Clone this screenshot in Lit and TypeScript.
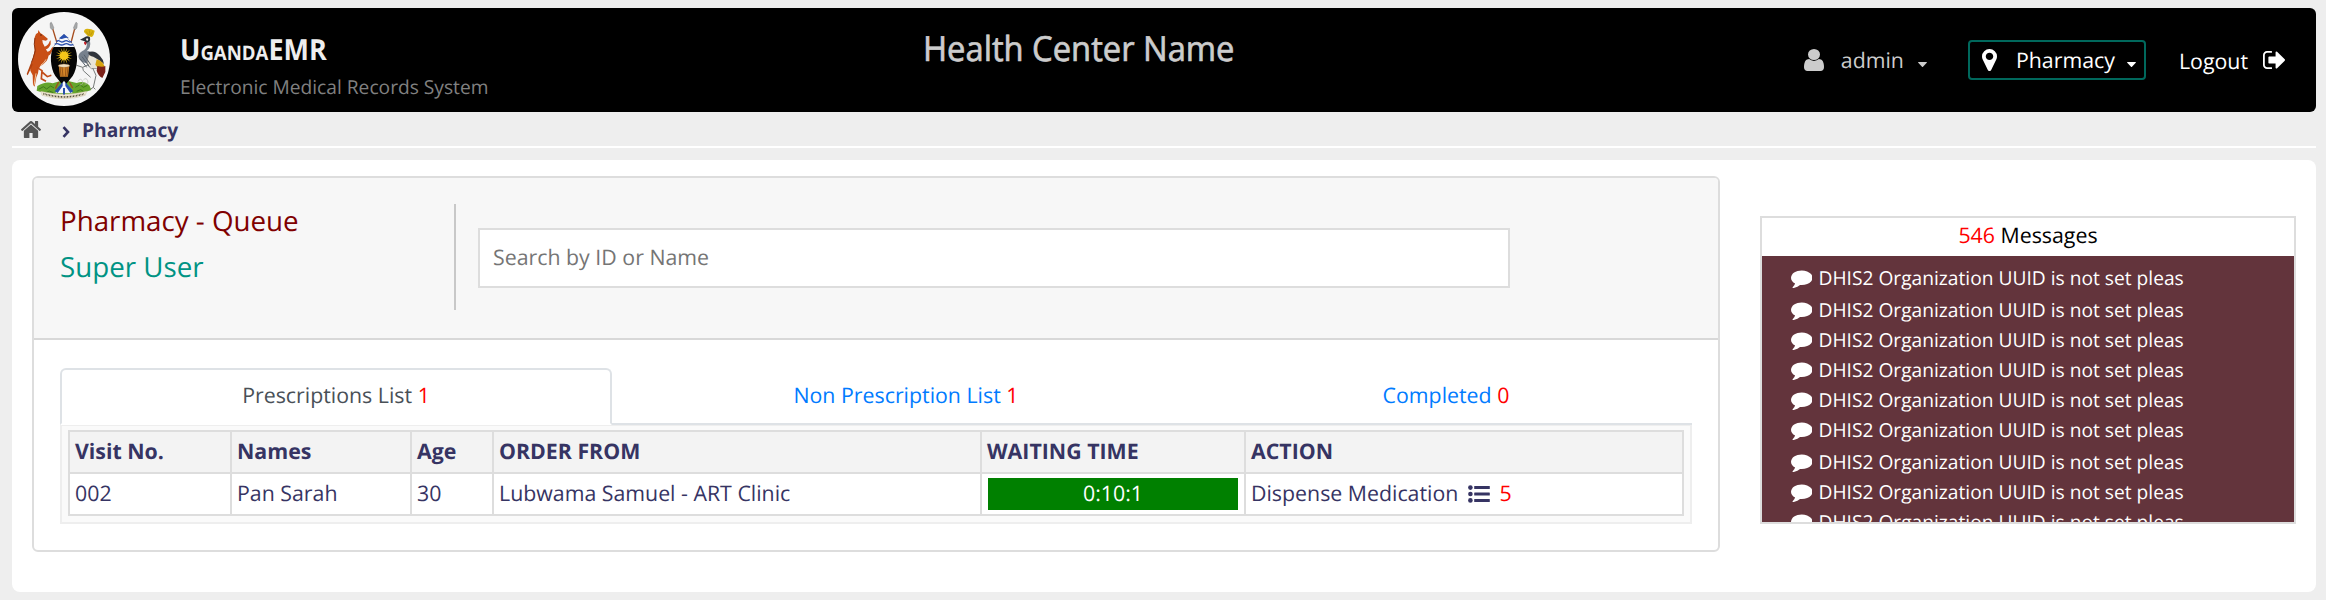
import { LitElement, html, css, svg } from "lit";
import { customElement } from "lit/decorators.js";

const P = {
  home: "M1472 992v480q0 26-19 45t-45 19h-384v-384h-256v384h-384q-26 0-45-19t-19-45v-480q0-1 .5-3t.5-3l575-474 575 474q1 2 1 6zm223-69l-62 74q-8 9-21 11h-3q-13 0-21-7l-692-577-692 577q-12 8-24 7-13-2-21-11l-62-74q-8-10-7-23.5t11-21.5l719-599q32-26 76-26t76 26l244 204v-195q0-14 9-23t23-9h192q14 0 23 9t9 23v408l219 182q10 8 11 21.5t-7 23.5z",
  user: "M1536 1399q0 109-62.5 187t-150.5 78h-854q-88 0-150.5-78t-62.5-187q0-85 8.5-160.5t31.5-152 58.5-131 94-89 134.5-34.5q131 128 313 128t313-128q76 0 134.5 34.5t94 89 58.5 131 31.5 152 8.5 160.5zm-256-887q0 159-112.5 271.5t-271.5 112.5-271.5-112.5-112.5-271.5 112.5-271.5 271.5-112.5 271.5 112.5 112.5 271.5z",
  marker: "M1152 640q0-106-75-181t-181-75-181 75-75 181 75 181 181 75 181-75 75-181zm256 0q0 109-33 179l-364 774q-16 33-47.5 52t-67.5 19-67.5-19-46.5-52l-365-774q-33-70-33-179 0-212 150-362t362-150 362 150 150 362z",
  signout: "M704 1440q0 4 1 20t.5 26.5-3 23.5-10 19.5-20.5 6.5h-320q-119 0-203.5-84.5t-84.5-203.5v-704q0-119 84.5-203.5t203.5-84.5h320q13 0 22.5 9.5t9.5 22.5q0 4 1 20t.5 26.5-3 23.5-10 19.5-20.5 6.5h-320q-66 0-113 47t-47 113v704q0 66 47 113t113 47h312l11.5 1 11.5 3 8 5.5 7 9 2 13.5zm928-544q0 26-19 45l-544 544q-19 19-45 19t-45-19-19-45v-288h-448q-26 0-45-19t-19-45v-384q0-26 19-45t45-19h448v-288q0-26 19-45t45-19 45 19l544 544q19 19 19 45z",
  comment: "M1792 896q0 174-120 321.5t-326 233-450 85.5q-70 0-145-8-198 175-460 242-49 14-114 22-17 2-30.5-9t-17.5-29v-1q-3-4-.5-12t2-10 4.5-9.5l6-9 7-8.5 8-9q7-8 31-34.5t34.500-38 31-39.500 32.500-51 27-59 26-76q-157-89-247.500-220t-90.500-281q0-130 71-248.500t191-204.500 286-136.500 348-50.500q244 0 450 85.500t326 233 120 321.500z",
  caret: "M0 0.6Q0 0 0.6 0H8.4Q9 0 9 0.6L5 4.8Q4.500 5.200 4 4.800Z",
};

const icon = (d: string, box: string, w: number, h: number, cls = "") =>
  html`<svg class="icon ${cls}" viewBox=${box} width=${w} height=${h} preserveAspectRatio="none"><path d=${d} fill="currentColor"></path></svg>`;

const rays = Array.from({ length: 16 }, (_, i) => i * 22.5);

@customElement("coat-of-arms")
export class CoatOfArms extends LitElement {
  static styles = css`
    :host { display: block; width: 92px; height: 94px; }
    svg { display: block; }
  `;
  render() {
    return html`<svg width="92" height="94" viewBox="0 0 276 282">
      <ellipse cx="138" cy="141" rx="138" ry="141" fill="#f5f5f5"></ellipse>
      <path d="M58 222Q84 206 104 214L138 204L176 213Q198 204 214 220L220 234Q180 250 138 246Q94 250 56 236Z" fill="#65a52c"></path>
      <path d="M62 232l14-8 10 7 12-9 10 6M172 226l14-8 10 8 12-6M84 242l10-5 12 5M176 238l12-5 8 5" stroke="#3f7a1c" stroke-width="3" fill="none"></path>
      <g fill="none" stroke="#a64b1c" stroke-width="4">
        <path d="M104 50L118 96"></path><path d="M170 50L158 96"></path>
        <path d="M122 210L112 230"></path><path d="M154 210L164 228"></path>
      </g>
      <path d="M96 34q4-8 7 2l5 12-5 6-6-6z" fill="#a5a7a8" stroke="#6c6e70"></path>
      <path d="M178 34q-4-8-7 2l-5 12 5 6 6-6z" fill="#a5a7a8" stroke="#6c6e70"></path>
      <g fill="#c94f16">
        <path d="M50 76L54 66L60 62L61 54L67 63Q72 66 84 76L90 81L84 86L73 84Q72 94 81 106L90 124Q94 134 86 146Q78 156 67 162Q60 170 60 184L55 196L50 224L45 218L44 190L37 176Q36 160 42 146Q49 126 50 112Q47 94 50 76Z"></path>
        <path d="M80 118Q96 122 101 108L104 104L106 111L96 128Q86 136 76 132Z"></path>
        <path d="M80 104Q92 100 95 88L98 85L98 97Q92 112 82 112Z"></path>
      </g>
      <path d="M40 150L26 186L29 190L44 158Z" fill="#b2410e"></path>
      <path d="M56 166L72 176L70 200L84 208M72 180L88 194L100 190" fill="none" stroke="#c24c18" stroke-width="5"></path>
      <path d="M84 142Q80 152 68 160M54 184L48 220" fill="none" stroke="#eec49c" stroke-width="3"></path>
      <path d="M51 78Q46 96 52 116Q46 140 40 152" fill="none" stroke="#8a3210" stroke-width="3"></path>
      <circle cx="69" cy="69" r="2" fill="#3a1a0c"></circle>

      <path d="M198 60Q197 51 208 50Q221 50 230 56Q228 70 222 75L210 73Z" fill="#d8b20e"></path>
      <path d="M204 58l9 12M214 55l2 15M224 58l-6 12" stroke="#a98505" stroke-width="1.500"></path>
      <path d="M186 83L200 76Q208 70 216 76Q219 86 212 94Q204 98 200 88Z" fill="#2a3038"></path>
      <path d="M204 80q4-3 7 1l-2 5q-5 1-5-6z" fill="#f3f3f3"></path>
      <path d="M198 90q6-3 8 3l-3 7q-6-2-5-10z" fill="#c22029"></path>
      <path d="M206 92Q210 108 192 118Q176 128 184 142Q196 158 214 150Q226 140 222 126Q216 114 206 118Q220 106 216 88Z" fill="#77818d"></path>
      <path d="M212 130Q228 118 240 132Q252 146 250 164Q236 172 220 170Q200 158 212 130Z" fill="#e9e4d8" stroke="#777" stroke-width="2"></path>
      <path d="M210 122Q228 112 246 132Q256 142 258 156Q242 142 226 134Q214 132 210 122Z" fill="#30343c"></path>
      <path d="M236 142Q256 148 260 166L254 180Q238 168 232 158Z" fill="#d7a40f"></path>
      <path d="M238 162Q254 166 262 162L262 180L253 198Q240 190 236 176Z" fill="#7c2219"></path>
      <path d="M186 140L206 166M192 134L214 164M198 128L218 158" fill="none" stroke="#56606b" stroke-width="3"></path>
      <path d="M212 158L194 166L176 160M194 166L196 176L218 196M224 168L234 190L226 226M226 226l-9 6M226 226l6 6" fill="none" stroke="#777b7a" stroke-width="3"></path>
      <path d="M180 208q8-12 13-1t-8 12M196 204q9-9 13 2t-9 10" fill="none" stroke="#b6b9b3" stroke-width="2"></path>

      <path d="M138 66C132 76 120 84 107 104C94 126 97 166 112 192L138 224L164 192C179 166 182 126 169 104C156 84 144 76 138 66Z" fill="#050505"></path>
      <path d="M138 66C132 76 120 84 107 105H169C156 84 144 76 138 66Z" fill="#f4f6fb"></path>
      <path d="M138 66L123 79Q131 83 138 79T153 79Z" fill="#284fae"></path>
      <path d="M115 88q6-4 11 0t12 0 12 0 11 0M110 97q7-4 14 0t14 0 14 0 14 0" stroke="#284fae" stroke-width="4" fill="none"></path>
      <g fill="#f4c619">
        ${rays.map((r) => svg`<path d="M136 122L138 105L140 122Z" transform="rotate(${r} 138 131)"></path>`)}
        <ellipse cx="138" cy="131" rx="13" ry="12"></ellipse>
      </g>
      <path d="M122 160L126 194H150L154 160Z" fill="#d28327"></path>
      <path d="M126 164l3 29M132 164l3 29M144 164l-2 29M150 164l-3 29" stroke="#7c4312" stroke-width="2"></path>
      <ellipse cx="138" cy="161" rx="17" ry="5" fill="#f0dfbe" stroke="#9b7040"></ellipse>
      <path d="M138 206L112 244H164Z" fill="#f5f7fa"></path>
      <path d="M134 210L110 238L119 243L134 222ZM142 210L166 238L157 243L142 222ZM135 228H141V250H135Z" fill="#284fae"></path>
      <path d="M68 238Q104 246 138 248Q172 246 206 238L202 250Q172 260 138 260Q104 260 72 250Z" fill="#efe8d3" stroke="#b9ac8c"></path>
      <path d="M76 245Q106 254 138 255Q170 254 200 245" fill="none" stroke="#57503c" stroke-width="5" stroke-dasharray="3 2 2 2"></path>
    </svg>`;
  }
}

@customElement("app-root")
export class AppRoot extends LitElement {
  static styles = css`
    :host { display: block; height: 600px; box-sizing: border-box; padding: 8px 10px 8px 12px; background: #eee;
      font-family: "Open Sans", "Noto Sans", sans-serif; font-size: 21.33px; color: #363463; overflow: hidden; white-space: nowrap;
      text-rendering: geometricPrecision; }
    * { box-sizing: border-box; }
    .icon { display: block; flex: none; }
    .top { height: 104px; background: #000; border-radius: 6px; display: grid; grid-template-columns: 168px 740px 1fr auto; }
    .crest { padding: 4px 0 0 6px; }
    .brand { padding-top: 24px; }
    .name { font-size: 29px; line-height: 36px; color: #eee; font-weight: 700; font-variant: small-caps; transform-origin: 0 0; transform: scaleX(.93); }
    .tag { font-size: 19.2px; line-height: 28px; color: #808080; padding-top: 5px; }
    .center { font-size: 34.5px; line-height: 44px; padding: 19px 0 0 3px; color: #ccc; -webkit-text-stroke: .7px #ccc; }
    .center span { display: inline-block; transform-origin: 0 0; transform: scaleX(.948); }
    .nav { display: flex; align-items: flex-start; padding-top: 32px; color: #fff; }
    .item { display: flex; align-items: center; height: 40px; }
    .item span { padding-top: 1px; }
    .user { color: #ccc; gap: 17px; margin-right: 41px; }
    .user .caret { margin-left: -3px; margin-top: 9px; }
    .loc { border: 2px solid #00685c; border-radius: 4px; width: 178px; padding-left: 12px; }
    .loc .label { margin: 0 12px 0 19px; }
    .loc .caret { margin-top: 9px; }
    .out { margin-left: 33px; margin-right: 31px; gap: 15px; padding-top: 2px; }
    .out .arrow { margin-top: -2px; }
    .crumbs { height: 36px; border-bottom: 2px solid #fff; display: flex; align-items: center; padding: 0 0 0 9px; font-size: 19.2px; font-weight: 700; }
    .crumbs .house { color: #555; }
    .crumbs .chev { margin: 5px 12px 0 21px; }
    .page { margin-top: 12px; height: 432px; background: #fff; border-radius: 8px; padding: 16px 20px; display: flex; gap: 40px; align-items: flex-start; }
    .queue { width: 1688px; height: 376px; border: 2px solid #ddd; border-radius: 6px; overflow: hidden; }
    .qhead { height: 162px; background: #f7f7f7; border-bottom: 2px solid #d8d8d8; display: flex; }
    .titles { width: 420px; padding: 20px 0 0 26px; font-size: 27.73px; line-height: 46px; color: #800000; }
    .titles .who { color: #009384; }
    .rule { width: 2px; height: 106px; background: #c8c8c8; margin-top: 26px; }
    .search { margin: 50px 0 0 22px; width: 1032px; height: 60px; border: 2px solid #ddd; background: #fff; color: #757575; padding: 0 0 0 13px; line-height: 56px; }
    .body { padding: 28px 26px 0; }
    .tabs { display: grid; grid-template-columns: 552px 586px 1fr; height: 56px; }
    .tab { text-align: center; color: #007bff; border-bottom: 2px solid #dee2e6; line-height: 55px; padding-left: 2px; }
    .tab.on { color: #495057; border: 2px solid #dee2e6; border-bottom-color: #fff; border-radius: 6px 6px 0 0; line-height: 51px; padding-left: 0; }
    .red { color: #f00; }
    .pane { border: 2px solid #eee; background: #fafafa; height: 100px; padding: 4px 6px 6px; }
    .grid { display: grid; grid-template-columns: 160px 178px 80px 486px 262px 1fr; grid-auto-rows: 40px; gap: 2px; padding: 2px; background: #ddd; }
    .grid div { background: #fff; padding-left: 5px; line-height: 39px; }
    .grid .th { background: #f3f3f3; font-weight: 700; }
    .grid .time { padding: 4px 6px; }
    .time span { display: block; background: #008000; color: #fff; text-align: center; line-height: 31px; height: 32px; }
    .grid .act { display: flex; align-items: flex-start; }
    .act .list { margin: 11px 9px 0 10px; }
    .msgs { width: 536px; height: 308px; margin-top: 40px; border: 2px solid #ddd; overflow: hidden; background: #63343c; }
    .mhead { height: 38px; background: #fff; color: #000; text-align: center; line-height: 36px; }
    .mlist { padding-top: 7px; }
    .msg { display: flex; align-items: center; height: 30px; padding: 0 0 0 28.5px; gap: 6.5px; color: #fff; font-size: 19.2px; line-height: 30px; }
    .msg:nth-child(5n + 1) { height: 32px; padding-bottom: 2px; }
  `;

  private headings = ["Visit No.", "Names", "Age", "ORDER FROM", "WAITING TIME", "ACTION"];
  private row = ["002", "Pan Sarah", "30", "Lubwama Samuel - ART Clinic"];

  render() {
    return html`
      <header class="top">
        <div class="crest"><coat-of-arms></coat-of-arms></div>
        <div class="brand"><div class="name">UgandaEMR</div><div class="tag">Electronic Medical Records System</div></div>
        <div class="center"><span>Health Center Name</span></div>
        <nav class="nav">
          <div class="item user">${icon(P.user, "256 128 1280 1536", 20, 22)}<span>admin</span>${icon(P.caret, "0 0 9 5", 9, 5, "caret")}</div>
          <div class="item loc">${icon(P.marker, "384 128 1024 1536", 15, 22)}<span class="label">Pharmacy</span>${icon(P.caret, "0 0 9 5", 9, 5, "caret")}</div>
          <div class="item out"><span>Logout</span>${icon(P.signout, "64 256 1568 1280", 22, 18, "arrow")}</div>
        </nav>
      </header>
      <nav class="crumbs">
        ${icon(P.home, "89 253 1614 1283", 20, 17, "house")}
        <svg class="icon chev" width="8" height="12" viewBox="0 0 8 12"><path d="M1.500 1.200L6 6L1.500 10.800" fill="none" stroke="currentColor" stroke-width="2.600"></path></svg>
        <span>Pharmacy</span>
      </nav>
      <main class="page">
        <section class="queue">
          <div class="qhead">
            <div class="titles"><div>Pharmacy - Queue</div><div class="who">Super User</div></div>
            <div class="rule"></div>
            <div class="search">Search by ID or Name</div>
          </div>
          <div class="body">
            <div class="tabs">
              <div class="tab on">Prescriptions List <span class="red">1</span></div>
              <div class="tab">Non Prescription List <span class="red">1</span></div>
              <div class="tab">Completed <span class="red">0</span></div>
            </div>
            <div class="pane">
              <div class="grid">
                ${this.headings.map((h) => html`<div class="th">${h}</div>`)}
                ${this.row.map((c) => html`<div>${c}</div>`)}
                <div class="time"><span>0:10:1</span></div>
                <div class="act">Dispense Medication
                  <svg class="icon list" width="22" height="18" viewBox="0 0 22 18" fill="currentColor">
                    <circle cx="2.400" cy="2.600" r="2.300"></circle><circle cx="2.400" cy="9" r="2.300"></circle><circle cx="2.400" cy="15.400" r="2.300"></circle>
                    <rect x="6.200" y="1.100" width="15.600" height="3" rx=".5"></rect><rect x="6.200" y="7.500" width="15.600" height="3" rx=".5"></rect><rect x="6.200" y="13.900" width="15.600" height="3" rx=".5"></rect>
                  </svg><span class="red">5</span></div>
              </div>
            </div>
          </div>
        </section>
        <aside class="msgs">
          <div class="mhead"><span class="red">546</span> Messages</div>
          <div class="mlist">
            ${Array.from({ length: 9 }, () => html`<div class="msg">${icon(P.comment, "0 128 1792 1664", 21.5, 19)}<span>DHIS2 Organization UUID is not set pleas</span></div>`)}
          </div>
        </aside>
      </main>
    `;
  }
}
